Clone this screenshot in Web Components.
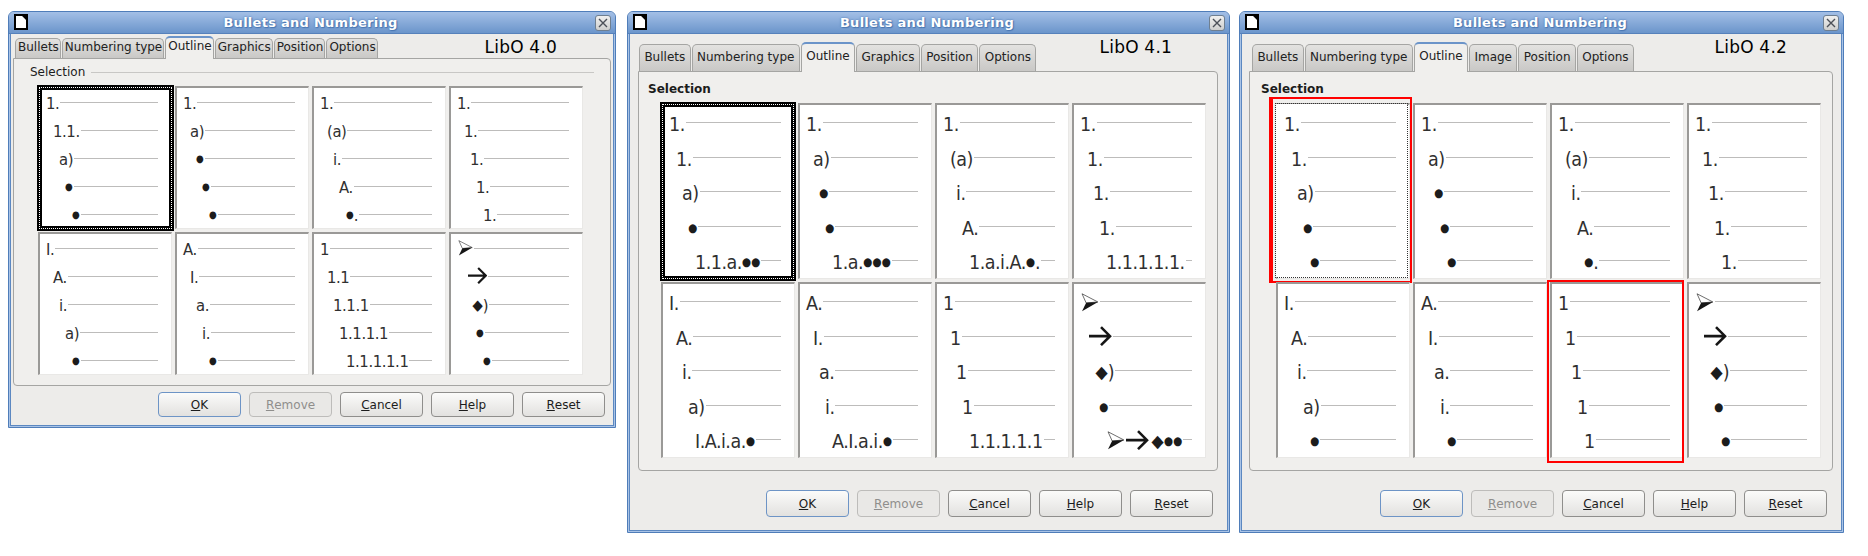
<!DOCTYPE html>
<html>
<head>
<meta charset="utf-8">
<title>Bullets and Numbering</title>
<style>
    html, body { margin: 0; background: #fff; }
    body {
        display: flex;
        align-items: flex-start;
        padding: 11px 0 0 8px;
        height: 545px;
        overflow: hidden;
        font: 12px "DejaVu Sans", sans-serif;
        color: #1c1c1c;
    }
</style>
</head>
<body>

<libo-dialog heading="Bullets and Numbering" version="LibO 4.0" compact style="width:608px">
    <dialog-tab slot="tabs">Bullets</dialog-tab>
    <dialog-tab slot="tabs">Numbering type</dialog-tab>
    <dialog-tab slot="tabs" active>Outline</dialog-tab>
    <dialog-tab slot="tabs">Graphics</dialog-tab>
    <dialog-tab slot="tabs">Position</dialog-tab>
    <dialog-tab slot="tabs">Options</dialog-tab>
    <outline-cell rows="1.|1.1.|a)|●|●" selected="heavy"></outline-cell>
    <outline-cell rows="1.|a)|●|●|●"></outline-cell>
    <outline-cell rows="1.|(a)|i.|A.|●."></outline-cell>
    <outline-cell rows="1.|1.|1.|1.|1."></outline-cell>
    <outline-cell rows="I.|A.|i.|a)|●"></outline-cell>
    <outline-cell rows="A.|I.|a.|i.|●"></outline-cell>
    <outline-cell rows="1|1.1|1.1.1|1.1.1.1|1.1.1.1.1"></outline-cell>
    <outline-cell rows="➢|→|◆)|●|●"></outline-cell>
    <dialog-button slot="buttons" default key="O">OK</dialog-button>
    <dialog-button slot="buttons" disabled key="R">Remove</dialog-button>
    <dialog-button slot="buttons" key="C">Cancel</dialog-button>
    <dialog-button slot="buttons" key="H">Help</dialog-button>
    <dialog-button slot="buttons" key="R">Reset</dialog-button>
</libo-dialog>

<libo-dialog heading="Bullets and Numbering" version="LibO 4.1" style="width:603px;margin-left:11px;--body-left:10px;--body-right:11px;--grid-left:21px;--label-left:-12px;--tabs-left:1px;--version-right:57px;--buttons-right:5px">
    <dialog-tab slot="tabs">Bullets</dialog-tab>
    <dialog-tab slot="tabs">Numbering type</dialog-tab>
    <dialog-tab slot="tabs" active>Outline</dialog-tab>
    <dialog-tab slot="tabs">Graphics</dialog-tab>
    <dialog-tab slot="tabs">Position</dialog-tab>
    <dialog-tab slot="tabs">Options</dialog-tab>
    <outline-cell rows="1.|1.|a)|●|1.1.a.●●" selected="heavy"></outline-cell>
    <outline-cell rows="1.|a)|●|●|1.a.●●●"></outline-cell>
    <outline-cell rows="1.|(a)|i.|A.|1.a.i.A.●."></outline-cell>
    <outline-cell rows="1.|1.|1.|1.|1.1.1.1.1."></outline-cell>
    <outline-cell rows="I.|A.|i.|a)|I.A.i.a.●"></outline-cell>
    <outline-cell rows="A.|I.|a.|i.|A.I.a.i.●"></outline-cell>
    <outline-cell rows="1|1|1|1|1.1.1.1.1"></outline-cell>
    <outline-cell rows="➢|→|◆)|●|➢→◆●●"></outline-cell>
    <dialog-button slot="buttons" default key="O">OK</dialog-button>
    <dialog-button slot="buttons" disabled key="R">Remove</dialog-button>
    <dialog-button slot="buttons" key="C">Cancel</dialog-button>
    <dialog-button slot="buttons" key="H">Help</dialog-button>
    <dialog-button slot="buttons" key="R">Reset</dialog-button>
</libo-dialog>

<libo-dialog heading="Bullets and Numbering" version="LibO 4.2" style="width:605px;margin-left:9px;--body-left:9px;--body-right:10px;--grid-left:25px;--label-left:-14px;--tabs-left:3px;--version-right:56px;--buttons-right:6px">
    <dialog-tab slot="tabs">Bullets</dialog-tab>
    <dialog-tab slot="tabs">Numbering type</dialog-tab>
    <dialog-tab slot="tabs" active>Outline</dialog-tab>
    <dialog-tab slot="tabs">Image</dialog-tab>
    <dialog-tab slot="tabs">Position</dialog-tab>
    <dialog-tab slot="tabs">Options</dialog-tab>
    <outline-cell rows="1.|1.|a)|●|●" selected="dotted" style="--mark-inset:-5px 0 -2px -6px;--mark-left:4px"></outline-cell>
    <outline-cell rows="1.|a)|●|●|●"></outline-cell>
    <outline-cell rows="1.|(a)|i.|A.|●."></outline-cell>
    <outline-cell rows="1.|1.|1.|1.|1."></outline-cell>
    <outline-cell rows="I.|A.|i.|a)|●"></outline-cell>
    <outline-cell rows="A.|I.|a.|i.|●"></outline-cell>
    <outline-cell rows="1|1|1|1|1" style="--mark-inset:-1px 2px -3px -2px"></outline-cell>
    <outline-cell rows="➢|→|◆)|●|●"></outline-cell>
    <dialog-button slot="buttons" default key="O">OK</dialog-button>
    <dialog-button slot="buttons" disabled key="R">Remove</dialog-button>
    <dialog-button slot="buttons" key="C">Cancel</dialog-button>
    <dialog-button slot="buttons" key="H">Help</dialog-button>
    <dialog-button slot="buttons" key="R">Reset</dialog-button>
</libo-dialog>

<script>
// Indent of each outline level, in px from the start of the row
const levelIndents = [0, 7, 13, 19, 26]

const arrowHeadIcon = `<svg class="glyph head" viewBox="0 0 17 18" role="img" aria-label="arrowhead">
    <path d="M1 .7 L16.3 8.6 L5 9.6 Z" fill="#fff" stroke="#333" stroke-width=".7"/>
    <path d="M16.5 8.6 L1 17.6 L5 9.4 Z" fill="#161616"/>
</svg>`
const arrowIcon = `<svg class="glyph arrow" viewBox="0 0 23 20" role="img" aria-label="arrow">
    <path d="M0 10 H20.5 M12 1 L21 10 L12 19" fill="none" stroke="#161616" stroke-width="2.6"/>
</svg>`

class LiboDialog extends HTMLElement {
    connectedCallback() {
        const heading = this.getAttribute('heading')
        const version = this.getAttribute('version')
        const shadowRoot = this.attachShadow({ mode: 'open' })
        shadowRoot.innerHTML = `
        <style>
            :host {
                display: flex;
                flex-direction: column;
                box-sizing: border-box;
                flex: none;
                border: 1px solid #4f7db9;
                border-top-left-radius: 6px;
                border-top-right-radius: 6px;
                background: #edecea;
                box-shadow: inset 0 0 0 1px #a9c3e6, inset 0 0 0 2px #5c88c1;
                --row-height: 34.5px;
                --cell-font: 19.5px;
                --cell-spacing: -.5px;
                --track-height: 179px;
                --cell-line: 27px;
                --rule-top: 11px;
                --dot-raise: 2.7px;
                --arrow-left: 1.5px;
                --frame-right: 1px;
                --tab-pad: 4px 4.4px 0 4.4px;
            }
            :host([compact]) {
                --row-height: 28px;
                --cell-font: 16.5px;
                --cell-spacing: -.4px;
                --track-height: 146px;
                --cell-line: 20px;
                --rule-top: 8px;
                --dot-raise: 3.3px;
                --arrow-left: 4px;
                --frame-right: 0px;
                --tab-pad: 0 1px 0 2px;
            }
            .title {
                height: 21px;
                display: flex;
                align-items: center;
                justify-content: center;
                position: relative;
                padding-right: 3px;
                border-top-left-radius: 5px;
                border-top-right-radius: 5px;
                background: linear-gradient(#a3bfe6, #6b95cb);
                border-bottom: 1px solid #5681bb;
                font-weight: bold;
                font-size: 13px;
                letter-spacing: .27px;
                color: #fff;
                text-shadow: 0 0 2px #3c6aa8, 1px 1px 1px #4d7ab5;
            }
            .doc { position: absolute; left: 5px; top: 2px; }
            .close {
                position: absolute;
                right: 4px;
                top: 3px;
                width: 14px;
                height: 14px;
                border: 1px solid #6f7f90;
                border-radius: 3px;
                background: linear-gradient(#f0f0ef, #cfcfce);
            }
            .close svg { display: block; }
            .body {
                flex: 1;
                display: flex;
                flex-direction: column;
                padding: 10px var(--body-right) 15px var(--body-left);
                position: relative;
            }
            :host([compact]) .body { padding: 4px 4px 10px 4px; }
            .tabs {
                display: flex;
                gap: 1px;
                padding-left: var(--tabs-left, 2px);
                height: 27px;
                align-items: flex-end;
            }
            :host([compact]) .tabs { height: 20px; }
            .version {
                position: absolute;
                right: var(--version-right, 58px);
                top: 1px;
                font-size: 17px;
                letter-spacing: .2px;
                line-height: 24px;
                color: #000;
            }
            .panel {
                border: 1px solid #a5a5a3;
                border-radius: 0 4px 4px 4px;
                background: #f0efed;
                padding: 9px 0 0 var(--grid-left, 23px);
                height: 400px;
                box-sizing: border-box;
            }
            :host([compact]) .panel { height: 328px; padding-top: 5px; }
            .group-label {
                display: flex;
                align-items: center;
                gap: 6px;
                height: 16px;
                margin: 0 16px 5px var(--label-left, -7px);
                font-weight: bold;
                font-size: 12px;
            }
            :host([compact]) .group-label { font-weight: normal; }
            :host([compact]) .group-label::after {
                content: "";
                flex: 1;
                height: 1px;
                background: #c8c7c5;
            }
            .grid {
                display: grid;
                grid-template-columns: repeat(4, 137px);
                grid-auto-rows: var(--track-height);
            }
            .buttons {
                display: flex;
                justify-content: flex-end;
                gap: 8px;
                padding: 19px var(--buttons-right, 6px) 0 0;
            }
            :host([compact]) .buttons { padding-top: 6px; }
        </style>
        <div class="title">
            <svg class="doc" width="14" height="16" viewBox="0 0 14 16">
                <path d="M1 1 H8.5 L13 5.5 V15 H1 Z" fill="#fff" stroke="#000" stroke-width="2"/>
                <path d="M8 0 L14 6 V0 Z" fill="#000"/>
            </svg>
            <span>${heading}</span>
            <div class="close">
                <svg width="14" height="14" viewBox="0 0 14 14">
                    <path d="M3 3 L11 11 M11 3 L3 11" stroke="#4c5058" stroke-width="1.4" fill="none"/>
                </svg>
            </div>
        </div>
        <div class="body">
            <div class="version">${version}</div>
            <div class="tabs"><slot name="tabs"></slot></div>
            <div class="panel">
                <div class="group-label">Selection</div>
                <div class="grid"><slot></slot></div>
            </div>
            <div class="buttons"><slot name="buttons"></slot></div>
        </div>`
    }
}

class DialogTab extends HTMLElement {
    connectedCallback() {
        const shadowRoot = this.attachShadow({ mode: 'open' })
        shadowRoot.innerHTML = `
        <style>
            :host {
                display: block;
                box-sizing: border-box;
                height: 100%;
                padding: var(--tab-pad);
                border: 1px solid #a5a5a3;
                border-bottom: none;
                border-radius: 5px 5px 0 0;
                background: linear-gradient(#e3e2e0, #c9c8c6);
                font-size: 12px;
                line-height: 17px;
                white-space: nowrap;
                color: #222;
                position: relative;
            }
            :host([active]) {
                height: calc(100% + 3px);
                margin-bottom: -1px;
                background: #f0efed;
                border-top: 2px solid #6b94c9;
                z-index: 1;
            }
        </style>
        <slot></slot>`
    }
}

class OutlineCell extends HTMLElement {
    connectedCallback() {
        const rows = this.getAttribute('rows').split('|')
        const selected = this.getAttribute('selected')
        const marked = this.style.getPropertyValue('--mark-inset') !== ''
        const shadowRoot = this.attachShadow({ mode: 'open' })
        const rowsHtml = rows.map((text, level) => {
            const glyphs = text
                .replace('➢', arrowHeadIcon)
                .replace('→', arrowIcon)
                .replace(/●/g, '<span class="dot">●</span>')
                .replace('◆', '<span class="diamond">◆</span>')
            return `<div class="row" style="padding-left:${levelIndents[level]}px">
                <span class="label">${glyphs}</span><span class="rule"></span>
            </div>`
        }).join('')
        shadowRoot.innerHTML = `
        <style>
            :host {
                display: block;
                position: relative;
                font-family: "DejaVu Sans Condensed", "DejaVu Sans", sans-serif;
                font-stretch: condensed;
            }
            .cell {
                box-sizing: border-box;
                margin: 1px 0 0 1px;
                width: 134px;
                height: calc(var(--track-height) - 3px);
                padding: 6px 0 0 6px;
                background: #fff;
                border-style: solid;
                border-width: 2px 1px 1px 2px;
                border-color: #9a9997 #e9e8e6 #e9e8e6 #9a9997;
            }
            .row {
                display: flex;
                align-items: flex-start;
                box-sizing: border-box;
                width: 112px;
                height: var(--row-height);
                font-size: var(--cell-font);
                letter-spacing: var(--cell-spacing);
                line-height: var(--cell-line);
                color: #303030;
            }
            .label { white-space: nowrap; flex: none; }
            .rule {
                flex: 1;
                height: 1px;
                min-width: 0;
                margin: var(--rule-top) 0 0 1px;
                background: #bdbcbb;
            }
            .dot {
                font-size: .6em;
                letter-spacing: 0;
                line-height: 0;
                vertical-align: var(--dot-raise);
                color: #1c1c1c;
            }
            .diamond {
                font-size: .9em;
                letter-spacing: 0;
                line-height: 0;
                vertical-align: 1.5px;
                margin-left: 2.5px;
                color: #1c1c1c;
            }
            .glyph { margin-top: -1em; }
            .head { width: .9em; height: .96em; vertical-align: -.08em; margin-left: 1px; }
            .arrow { width: 1.18em; height: 1.04em; vertical-align: -.1em; margin-left: var(--arrow-left); }
            .frame {
                position: absolute;
                inset: 0;
                pointer-events: none;
                box-sizing: border-box;
            }
            .heavy {
                right: var(--frame-right);
                border: 2px solid #000;
                outline: 1px dotted #fff;
                outline-offset: -3px;
                box-shadow: inset 0 0 0 3px #000;
            }
            .dotted {
                top: 1px;
                right: 4px;
                bottom: 3px;
                border: 1px dotted #333;
                box-shadow: inset 0 0 0 2px #fff;
            }
            .mark {
                position: absolute;
                inset: var(--mark-inset);
                border: 2px solid #f00;
                border-left-width: var(--mark-left, 2px);
                pointer-events: none;
            }
        </style>
        <div class="cell">${rowsHtml}</div>
        ${selected ? `<div class="frame ${selected}"></div>` : ''}
        ${marked ? '<div class="mark"></div>' : ''}`
    }
}

class DialogButton extends HTMLElement {
    connectedCallback() {
        const key = this.getAttribute('key')
        const label = this.textContent
        // Underline the mnemonic letter
        const text = label.replace(key, `<u>${key}</u>`)
        const shadowRoot = this.attachShadow({ mode: 'open' })
        shadowRoot.innerHTML = `
        <style>
            :host {
                display: flex;
                align-items: center;
                justify-content: center;
                box-sizing: border-box;
                width: 83px;
                height: var(--button-height, 27px);
                border: 1px solid #8f8e8c;
                border-radius: 4px;
                background: linear-gradient(#fbfbfa, #e2e1df);
                font-size: 12px;
                color: #1c1c1c;
            }
            :host-context([compact]) { height: 25px; }
            :host([default]) { border-color: #6d94c6; }
            :host([disabled]) {
                border-color: #bdbcba;
                background: #e9e8e6;
                color: #8f8e8c;
            }
        </style>
        ${text}`
    }
}

customElements.define('libo-dialog', LiboDialog)
customElements.define('dialog-tab', DialogTab)
customElements.define('outline-cell', OutlineCell)
customElements.define('dialog-button', DialogButton)
</script>
</body>
</html>
